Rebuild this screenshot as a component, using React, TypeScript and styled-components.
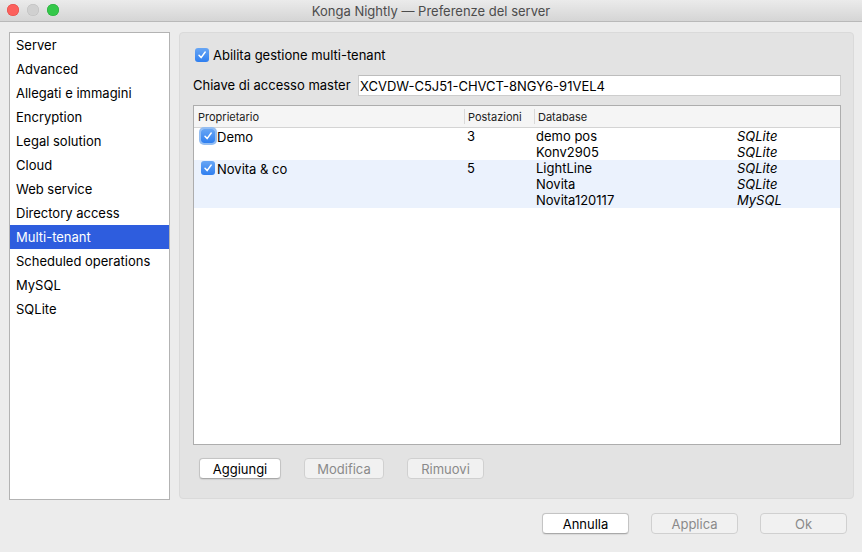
import React from "react"
import styled, { createGlobalStyle, css } from "styled-components"

const GlobalStyle = createGlobalStyle`
  html, body {
    margin: 0;
    padding: 0;
    background: #ececec;
  }
  body {
    font-family: Inter, "Liberation Sans", sans-serif;
    font-size: 13px;
    color: #000;
  }
`

const Window = styled.div`
  width: 862px;
  height: 552px;
  display: flex;
  flex-direction: column;
  background: #ececec;
  overflow: hidden;
`

const TitleBar = styled.div`
  height: 21px;
  flex: none;
  position: relative;
  display: flex;
  align-items: center;
  justify-content: center;
  background: linear-gradient(#ebebeb, #d5d5d5);
  border-bottom: 1px solid #b9b9b9;
  color: #4c4c4c;
  font-size: 13px;
`

const Lights = styled.div`
  position: absolute;
  left: 7px;
  top: 4px;
  display: flex;
  gap: 8px;
`

const Light = styled.span<{ $c: string; $b: string }>`
  width: 12px;
  height: 12px;
  border-radius: 50%;
  background: ${p => p.$c};
  box-shadow: inset 0 0 0 0.5px ${p => p.$b};
`

const Body = styled.div`
  display: flex;
  gap: 9px;
  padding: 10px 8px 0 9px;
  height: 468px;
`

const Sidebar = styled.ul`
  list-style: none;
  margin: 0;
  padding: 0;
  width: 159px;
  height: 466px;
  background: #fff;
  border: 1px solid #b3b3b3;
`

const SideItem = styled.li<{ $active?: boolean }>`
  height: 24px;
  line-height: 24px;
  padding-left: 6px;
  ${p =>
    p.$active &&
    css`
      background: #2e5dde;
      color: #fff;
    `}
`

const Panel = styled.div`
  flex: 1;
  height: 467px;
  background: #e3e3e3;
  border: 1px solid #dadada;
  border-radius: 4px;
  padding: 10px 12px 0 13px;
  box-sizing: border-box;
  display: flex;
  flex-direction: column;
`

const CheckRow = styled.label`
  display: flex;
  align-items: center;
  gap: 4px;
  height: 20px;
  padding-left: 2px;
  margin-top: 2px;
`

const Box = styled.span<{ $focus?: boolean }>`
  width: 14px;
  height: 14px;
  flex: none;
  border-radius: 3px;
  background: linear-gradient(#68a6f4, #2f7ff0);
  display: flex;
  align-items: center;
  justify-content: center;
  ${p =>
    p.$focus &&
    css`
      box-shadow: 0 0 0 2px #93bdf2;
    `}
`

const KeyRow = styled.div`
  display: flex;
  align-items: center;
  margin-top: 9px;
  height: 22px;
`

const KeyLabel = styled.span`
  width: 165px;
  flex: none;
`

const KeyInput = styled.div`
  flex: 1;
  height: 21px;
  line-height: 21px;
  background: #fff;
  border: 1px solid #cdcdcd;
  border-top-color: #bdbdbd;
  padding-left: 1px;
  box-sizing: border-box;
  font-size: 13px;
`

const Table = styled.div`
  margin-top: 9px;
  height: 338px;
  background: #fff;
  border: 1px solid #adadad;
  display: flex;
  flex-direction: column;
`

const cols = css`
  display: grid;
  grid-template-columns: 270px 70px 1fr;
`

const HeadRow = styled.div`
  ${cols};
  height: 21px;
  background: #f5f5f5;
  border-bottom: 1px solid #d4d4d4;
  font-size: 11px;
  color: #222;
`

const HeadCell = styled.div<{ $sep?: boolean }>`
  display: flex;
  align-items: center;
  padding-left: 4px;
  ${p =>
    p.$sep &&
    css`
      position: relative;
      &::before {
        content: "";
        position: absolute;
        left: 0;
        top: 3px;
        bottom: 3px;
        width: 1px;
        background: #d9d9d9;
      }
    `}
`

const Row = styled.div<{ $alt?: boolean }>`
  ${cols};
  background: ${p => (p.$alt ? "#ebf2fd" : "#fff")};
`

const OwnerCell = styled.div`
  display: flex;
  align-items: flex-start;
  gap: 2px;
  padding-left: 7px;
  height: 16px;
  line-height: 16px;
  padding-top: 1px;
`

const NumCell = styled.div`
  padding-left: 3px;
  line-height: 16px;
`

const DbList = styled.div`
  display: grid;
  grid-template-columns: 201px auto;
  line-height: 16px;
  padding-left: 2px;
`

const DbType = styled.span`
  font-style: italic;
`

const Actions = styled.div`
  display: flex;
  gap: 23px;
  margin-top: 13px;
  padding-left: 6px;
`

const Button = styled.button<{ $w: number; $disabled?: boolean }>`
  width: ${p => p.$w}px;
  height: 21px;
  padding: 0;
  font-family: inherit;
  font-size: 13px;
  border-radius: 4px;
  border: 1px solid #c4c4c4;
  border-bottom-color: #a9a9a9;
  background: #fff;
  color: #000;
  box-shadow: 0 0.5px 1px rgba(0, 0, 0, 0.08);
  ${p =>
    p.$disabled &&
    css`
      background: #f1f1f1;
      color: #8a8a8a;
      border-color: #d0d0d0;
      box-shadow: none;
    `}
`

const Footer = styled.div`
  display: flex;
  justify-content: flex-end;
  gap: 22px;
  padding: 13px 15px 0 0;
`

const Check = ({ focus }: { focus?: boolean }) => (
  <Box $focus={focus}>
    <svg width="10" height="10" viewBox="0 0 10 10">
      <path d="M2 5.2 L4.1 7.6 L8.2 2" fill="none" stroke="#fff" strokeWidth="1.5" strokeLinecap="round" strokeLinejoin="round" />
    </svg>
  </Box>
)

const sections = [
  "Server",
  "Advanced",
  "Allegati e immagini",
  "Encryption",
  "Legal solution",
  "Cloud",
  "Web service",
  "Directory access",
  "Multi-tenant",
  "Scheduled operations",
  "MySQL",
  "SQLite",
]

const tenants = [
  {
    owner: "Demo",
    seats: 3,
    dbs: [
      ["demo pos", "SQLite"],
      ["Konv2905", "SQLite"],
    ],
  },
  {
    owner: "Novita & co",
    seats: 5,
    dbs: [
      ["LightLine", "SQLite"],
      ["Novita", "SQLite"],
      ["Novita120117", "MySQL"],
    ],
  },
]

const App = () => (
  <Window>
    <GlobalStyle />
    <TitleBar>
      <Lights>
        <Light $c="#fc605c" $b="#de4a45" />
        <Light $c="#d0d0d0" $b="#bdbdbd" />
        <Light $c="#34c84a" $b="#27a83a" />
      </Lights>
      Konga Nightly — Preferenze del server
    </TitleBar>
    <Body>
      <Sidebar>
        {sections.map(s => (
          <SideItem key={s} $active={s === "Multi-tenant"}>
            {s}
          </SideItem>
        ))}
      </Sidebar>
      <Panel>
        <CheckRow>
          <Check />
          Abilita gestione multi-tenant
        </CheckRow>
        <KeyRow>
          <KeyLabel>Chiave di accesso master</KeyLabel>
          <KeyInput>XCVDW-C5J51-CHVCT-8NGY6-91VEL4</KeyInput>
        </KeyRow>
        <Table>
          <HeadRow>
            <HeadCell>Proprietario</HeadCell>
            <HeadCell $sep>Postazioni</HeadCell>
            <HeadCell $sep>Database</HeadCell>
          </HeadRow>
          {tenants.map((t, i) => (
            <Row key={t.owner} $alt={i % 2 === 1}>
              <OwnerCell>
                <Check focus={i === 0} />
                {t.owner}
              </OwnerCell>
              <NumCell>{t.seats}</NumCell>
              <DbList>
                {t.dbs.map(([name, type]) => (
                  <React.Fragment key={name}>
                    <span>{name}</span>
                    <DbType>{type}</DbType>
                  </React.Fragment>
                ))}
              </DbList>
            </Row>
          ))}
        </Table>
        <Actions>
          <Button $w={82}>Aggiungi</Button>
          <Button $w={80} $disabled>
            Modifica
          </Button>
          <Button $w={77} $disabled>
            Rimuovi
          </Button>
        </Actions>
      </Panel>
    </Body>
    <Footer>
      <Button $w={87}>Annulla</Button>
      <Button $w={87} $disabled>
        Applica
      </Button>
      <Button $w={87} $disabled>
        Ok
      </Button>
    </Footer>
  </Window>
)

export default App
